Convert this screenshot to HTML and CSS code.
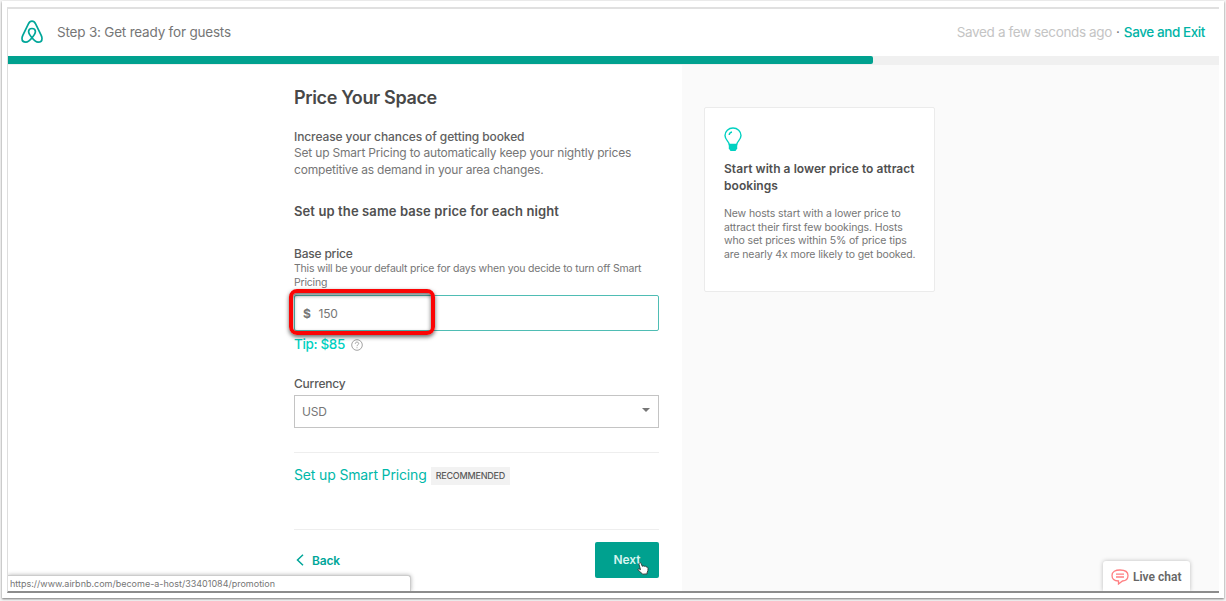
FILE: index.html
```
<!DOCTYPE html>
<html>

<head>
    <meta charset="utf-8" />
    <title>Price Your Space</title>
    <link rel="stylesheet" href="styles.css">
</head>

<body>
    <div class="window">
        <div class="page">
            <header class="header">
                <svg class="logo" width="22" height="24" viewBox="0 0 22 24">
                    <path d="M11 17.800C8.700 15.200 7.600 13.300 7.600 11.600C7.600 9.700 9 8.500 11 8.500C13 8.500 14.400 9.700 14.400 11.600C14.400 13.300 13.300 15.200 11 17.800C8.700 20.800 6.900 22.200 4.900 22.200C2.600 22.200 1 20.600 1 18.400C1 17.400 1.300 16.600 1.800 15.400L7.400 3.800C8.300 2 9.300 1.100 11 1.100C12.700 1.100 13.700 2 14.600 3.800L20.200 15.400C20.700 16.600 21 17.400 21 18.400C21 20.600 19.400 22.200 17.100 22.200C15.100 22.200 13.300 20.800 11 17.800Z" />
                </svg>
                <span class="step">Step 3: Get ready for guests</span>
                <span class="saved">Saved a few seconds ago</span>
                <span class="dot">·</span>
                <a class="exit">Save and Exit</a>
            </header>
            <div class="progress">
                <div class="progress-bar"></div>
            </div>
            <div class="content">
                <main class="form">
                    <h1>Price Your Space</h1>
                    <h2>Increase your chances of getting booked</h2>
                    <p class="intro">Set up Smart Pricing to automatically keep your nightly prices<br>competitive as demand in your area changes.</p>
                    <h3>Set up the same base price for each night</h3>
                    <label class="base-label">Base price</label>
                    <p class="hint">This will be your default price for days when you decide to turn off Smart<br>Pricing</p>
                    <div class="price-input">
                        <b>$</b>
                        <span>150</span>
                        <div class="highlight"></div>
                    </div>
                    <div class="tip">
                        <span>Tip: $85</span>
                        <svg width="12" height="12" viewBox="0 0 12 12">
                            <circle cx="6" cy="6" r="5.300" />
                            <path d="M4.300 4.800C4.300 3.700 5 3.100 6 3.100S7.700 3.700 7.700 4.600C7.700 5.800 6 5.800 6 7.200M6 8.300V9.200" />
                        </svg>
                    </div>
                    <label class="currency-label">Currency</label>
                    <div class="select">
                        <span>USD</span>
                        <i class="caret"></i>
                    </div>
                    <div class="smart">
                        <a class="smart-link">Set up Smart Pricing</a>
                        <span class="badge">RECOMMENDED</span>
                    </div>
                    <div class="actions">
                        <a class="back">
                            <svg width="8" height="12" viewBox="0 0 8 12">
                                <path d="M7 0.700L1.500 6L7 11.300" />
                            </svg>
                            <span>Back</span>
                        </a>
                        <div class="next">
                            <span>Next</span>
                            <svg class="cursor" width="12" height="13" viewBox="0 0 12 13">
                                <path d="M2.600 1C3.400 0.500 4 1 4.300 1.700L5.200 4.200L6.400 3.900L7.400 4.300L8.500 4.200L9.300 4.900C10.400 4.800 10.900 5.500 11 6.400C11.200 8.200 10.800 9.200 10.200 10.300L10.100 11.900L5.600 12.200C4.600 10.600 2.900 9.600 1.200 8.200C0.600 7.300 1.500 6.700 2.400 7.100L3.500 7.700L2 2.300C1.900 1.700 2.100 1.300 2.600 1Z" />
                            </svg>
                        </div>
                    </div>
                </main>
                <aside class="side">
                    <div class="card">
                        <svg width="18" height="25" viewBox="0 0 18 25">
                            <path class="bulb" d="M5.200 17.500C5 14.500 1 12.800 1 8.500C1 4.200 4.500 1 9 1S17 4.200 17 8.500C17 12.800 13 14.500 12.800 17.500Z" />
                            <path class="bulb" d="M5.200 8C5.300 6.500 6.500 5.300 8 5" />
                            <path class="base" d="M4.800 17.500H13.200V21.500L11.500 24H6.500L4.800 21.500Z" />
                        </svg>
                        <h4>Start with a lower price to attract<br>bookings</h4>
                        <p>New hosts start with a lower price to<br>attract their first few bookings. Hosts<br>who set prices within 5% of price tips<br>are nearly 4x more likely to get booked.</p>
                    </div>
                </aside>
            </div>
            <div class="status">https://www.airbnb.com/become-a-host/33401084/promotion</div>
            <div class="chat">
                <svg width="18" height="16" viewBox="0 0 18 16">
                    <path d="M9 1C13.500 1 17 2.500 17 6.500C17 10 14.500 11.800 11.500 12L7.500 15V12C3.500 11.900 1 10.300 1 6.500C1 2.500 4.500 1 9 1ZM5 5.200H13M5 8H13" />
                </svg>
                <span>Live chat</span>
            </div>
        </div>
    </div>
</body>

</html>
```
FILE: styles.css
```
* {
    box-sizing: border-box;
    padding: 0;
    margin: 0;
}

body {
    width: 1226px;
    height: 601px;
    overflow: hidden;
    background: #f4f4f4;
    font-family: Inter, "Open Sans", sans-serif;
    color: #767676;
}

.window {
    width: 1222px;
    height: 597px;
    margin: 1px 2px;
    padding: 6px 5px 5px 5px;
    background: #fff;
    box-shadow: 0 1px 2px #777;
}

.page {
    position: relative;
    height: 586px;
    border-top: 2px solid #e0e0e0;
    border-bottom: 2px solid #8c8c8c;
    border-left: 1px solid #ddd;
    overflow: hidden;
}

.header {
    display: flex;
    align-items: center;
    height: 47px;
    padding-left: 13px;
    padding-right: 14px;
    padding-bottom: 1px;
    font-size: 13.500px;
}

.logo {
    fill: none;
    stroke: #00a699;
    stroke-width: 1.700;
}

.step {
    margin-left: 14px;
    letter-spacing: -0.200px;
}

.saved {
    margin-left: auto;
    color: #c4c4c4;
    letter-spacing: -0.370px;
}

.dot {
    margin: 0 4px;
}

.exit {
    color: #00b3a6;
    font-weight: 500;
    letter-spacing: -0.420px;
}

.progress {
    height: 9px;
    background: #f0f0f0;
}

.progress-bar {
    width: 865px;
    height: 8px;
    background: #00a18f;
    border-radius: 0 2px 2px 0;
}

.content {
    display: flex;
    height: 526px;
}

.form {
    width: 674px;
    padding: 21px 23px 0 286px;
}

h1 {
    font-size: 18px;
    line-height: 24px;
    font-weight: 600;
    color: #484848;
    letter-spacing: -0.360px;
}

h2 {
    margin-top: 18px;
    font-size: 12px;
    line-height: 17px;
    font-weight: 500;
    color: #606060;
    letter-spacing: -0.100px;
}

.intro {
    font-size: 12px;
    line-height: 16.500px;
    letter-spacing: -0.190px;
}

h3 {
    margin-top: 24px;
    font-size: 13px;
    line-height: 18px;
    font-weight: 600;
    color: #505050;
    letter-spacing: 0.110px;
}

label {
    display: block;
    font-size: 12px;
    line-height: 16px;
    font-weight: 500;
    color: #5a5a5a;
    letter-spacing: -0.200px;
}

.base-label {
    margin-top: 26px;
}

.hint {
    font-size: 10.500px;
    line-height: 13.500px;
    letter-spacing: -0.200px;
}

.price-input {
    position: relative;
    display: flex;
    align-items: center;
    height: 36px;
    margin-top: 6px;
    padding-left: 8px;
    gap: 8px;
    border: 1px solid #4fbdb4;
    border-radius: 2px;
    font-size: 12px;
    letter-spacing: -0.300px;
}

.highlight {
    position: absolute;
    left: -6px;
    top: -7px;
    width: 146px;
    height: 46px;
    border: 4px solid #fb0505;
    border-radius: 8px;
    box-shadow: 0 2px 4px rgba(0, 0, 0, 0.600), inset 0 2px 4px rgba(0, 0, 0, 0.600);
}

.tip {
    display: flex;
    align-items: center;
    gap: 6px;
    height: 18px;
    margin-top: 4px;
    font-size: 13.500px;
    color: #00d1c1;
    font-weight: 500;
    letter-spacing: -0.350px;
}

.tip svg {
    margin-top: 2px;
    fill: none;
    stroke: #999;
    stroke-width: 0.900;
}

.currency-label {
    margin-top: 23px;
}

.select {
    display: flex;
    align-items: center;
    justify-content: space-between;
    height: 33px;
    margin-top: 3px;
    padding: 0 8px 0 7px;
    border: 1px solid #c4c4c4;
    font-size: 12px;
    letter-spacing: -0.200px;
}

.caret {
    margin-bottom: 3px;
    border: 4px solid transparent;
    border-top-color: #767676;
    border-bottom: 0;
}

.smart {
    display: flex;
    align-items: center;
    height: 77px;
    margin-top: 24px;
    padding-bottom: 31px;
    border-top: 1px solid #eee;
}

.smart-link {
    margin-bottom: 2px;
    font-size: 14px;
    color: #00b8a9;
    letter-spacing: -0.150px;
}

.badge {
    height: 18px;
    margin-left: 4px;
    padding: 0 5px;
    background: #f2f2f2;
    font-size: 9px;
    line-height: 18px;
    font-weight: 500;
    color: #5a5a5a;
    letter-spacing: -0.220px;
}

.actions {
    display: flex;
    align-items: center;
    justify-content: space-between;
    height: 61px;
    border-top: 1px solid #eee;
}

.back {
    display: flex;
    align-items: center;
    gap: 8px;
    padding-left: 2px;
    font-size: 12px;
    font-weight: 600;
    color: #00a699;
    letter-spacing: -0.200px;
}

.back svg {
    fill: none;
    stroke: #00a699;
    stroke-width: 1.500;
}

.next {
    position: relative;
    width: 64px;
    height: 36px;
    border-radius: 2px;
    background: #00a18f;
    text-align: center;
    font-size: 12px;
    line-height: 36px;
    font-weight: 600;
    color: #d8f5f1;
}

.cursor {
    position: absolute;
    left: 42px;
    top: 20px;
    fill: #fff;
    stroke: #333;
    stroke-width: 0.900;
}

.side {
    flex: 1;
    padding: 42px 0 0 22px;
    background: #fafafa;
}

.card {
    width: 231px;
    height: 185px;
    padding: 19px;
    border: 1px solid #ebebeb;
    border-radius: 2px;
    background: #fff;
}

.card svg {
    display: block;
}

.bulb {
    fill: none;
    stroke: #00d1c1;
    stroke-width: 1.400;
}

.base {
    fill: #00d1c1;
}

h4 {
    margin-top: 9px;
    font-size: 12px;
    line-height: 16.500px;
    font-weight: 600;
    color: #505050;
    letter-spacing: 0.050px;
    white-space: nowrap;
}

.card p {
    margin-top: 13px;
    font-size: 10.500px;
    line-height: 13.500px;
    letter-spacing: -0.120px;
    white-space: nowrap;
}

.status {
    position: absolute;
    left: 0;
    bottom: 0;
    width: 403px;
    height: 16px;
    padding-left: 2px;
    background: #fff;
    border: 1px solid #ccc;
    border-left: 0;
    border-bottom: 0;
    border-radius: 0 3px 0 0;
    box-shadow: 0 0 4px rgba(0, 0, 0, 0.300);
    font-size: 9px;
    line-height: 15px;
}

.chat {
    position: absolute;
    right: 29px;
    bottom: 0;
    display: flex;
    align-items: center;
    gap: 4px;
    width: 87px;
    height: 30px;
    padding-top: 2px;
    padding-left: 8px;
    background: #fff;
    border-radius: 3px 3px 0 0;
    box-shadow: 0 0 4px rgba(0, 0, 0, 0.250);
    font-family: Roboto, sans-serif;
    font-size: 12px;
    font-weight: 600;
    color: #666;
}

.chat svg {
    fill: none;
    stroke: #ff7f82;
    stroke-width: 1.300;
}
```
